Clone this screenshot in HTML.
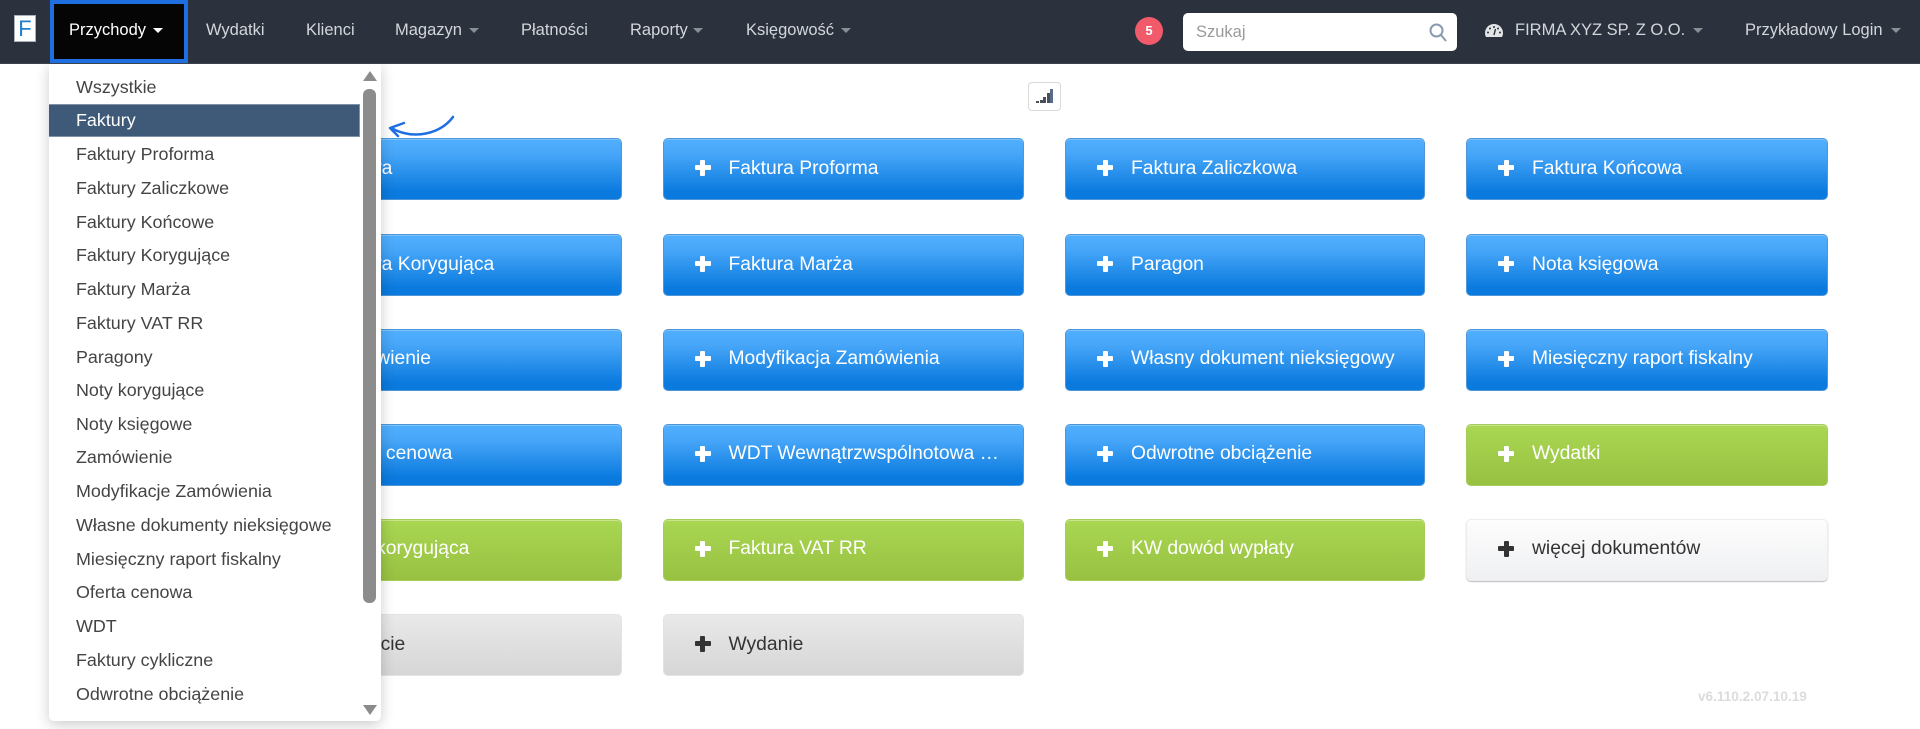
<!DOCTYPE html>
<html lang="pl">
<head>
<meta charset="utf-8">
<title>Przychody</title>
<style>
html,body{margin:0;padding:0;width:1920px;height:729px;overflow:hidden;background:#fff;font-family:"Liberation Sans",sans-serif}
*{box-sizing:border-box}
.nav{position:absolute;z-index:2;left:0;top:0;width:1920px;height:64px;background:#2b323d;border-bottom:1px solid #3d434c}
.n{position:absolute;top:18px;line-height:24px;font-size:16.5px;color:#d3d6da;white-space:nowrap}
.car{position:absolute;top:28px;width:0;height:0;border-left:5.5px solid transparent;border-right:5.5px solid transparent;border-top:5.5px solid #8b9097}
.logo{position:absolute;left:14px;top:15px;width:22px;height:27px;background:#fff;border:1px solid #a9b2bb;color:#1f7fd0;font-size:22px;line-height:25px;text-align:center}
.act{position:absolute;left:50px;top:0;width:138px;height:63px;background:#050505;border:4px solid #1f6fe0}
.badge{position:absolute;left:1135px;top:17px;width:28px;height:28px;border-radius:50%;background:#f05a6a;color:#fff;font-size:13px;font-weight:bold;line-height:27px;text-align:center}
.search{position:absolute;left:1183px;top:13px;width:274px;height:38px;background:#fff;border-radius:5px}
.search span{position:absolute;left:13px;top:7px;font-size:16.5px;line-height:24px;color:#9a9a9a}
.b{position:absolute;width:361px;height:62px;border-radius:5px;font-size:19.3px;line-height:24px;white-space:nowrap}
.b span{position:absolute;left:65px;top:17px}
.d span{top:18px}
.b i{position:absolute;left:31px;top:26px;width:16px;height:5px;background:currentColor;border-radius:1px}
.b i:after{content:"";position:absolute;left:5.5px;top:-5.5px;width:5px;height:16px;background:currentColor;border-radius:1px}
.c3{width:360px}
.c4{width:362px}
.bl{background:linear-gradient(#4fadfd 6%,#47a6f8 25%,#0a7ade 88%);border:1px solid #4e96d8;box-shadow:inset 0 1px 0 #7cc3fd;color:#fff}
.gr{background:linear-gradient(#a9d752,#98c142);border:1px solid #a5cc5c;box-shadow:inset 0 1px 0 #c8e58e;color:#fff}
.wh{background:linear-gradient(#fdfdfd,#eff0f2);border:1px solid #ececec;box-shadow:0 1px 1px #bbb;color:#333}
.sv{background:linear-gradient(#e9e9e9,#d6d6d6);border:1px solid #e3e3e3;color:#333}
.menu{position:absolute;left:49px;top:63px;width:332px;height:658px;background:#fff;border-radius:0 0 5px 5px;box-shadow:0 4px 14px rgba(0,0,0,.2)}
.m{position:absolute;left:27px;font-size:17.9px;line-height:24px;color:#444;white-space:nowrap}
.hl{position:absolute;left:0;top:41px;width:311px;height:33px;background:#3e5a78;border:1px solid #7f92a8;border-left:0}
.thumb{position:absolute;left:314px;top:26px;width:13px;height:514px;background:#8c8c8c;border-radius:6px}
.sig{position:absolute;left:1028px;top:82px;width:33px;height:29px;border:1px solid #d9d9d9;border-radius:4px;background:#fff}
.sig u{position:absolute;bottom:7px;width:3px;background:#4a4f5c}
.ver{position:absolute;left:1698px;top:687px;font-size:13.6px;line-height:20px;color:#dcdcdc;font-weight:bold}
</style>
</head>
<body>
<div class="nav">
<div class="logo">F</div>
<div class="act"></div>
<div class="n" style="left:69px;color:#fff">Przychody</div>
<div class="car" style="left:153px;border-top-color:#fff"></div>
<div class="n" style="left:206px">Wydatki</div>
<div class="n" style="left:306px">Klienci</div>
<div class="n" style="left:395px">Magazyn</div>
<div class="car" style="left:469px"></div>
<div class="n" style="left:521px">Płatności</div>
<div class="n" style="left:630px">Raporty</div>
<div class="car" style="left:693px"></div>
<div class="n" style="left:746px">Księgowość</div>
<div class="car" style="left:841px"></div>
<div class="badge">5</div>
<div class="search"><span>Szukaj</span>
<svg style="position:absolute;left:245px;top:9px" width="20" height="20" viewBox="0 0 20 20" fill="none" stroke="#8a9bb0" stroke-width="2"><circle cx="8.500" cy="8.500" r="6"/><path d="M13 13l5 6"/></svg>
</div>
<svg style="position:absolute;left:1485px;top:24px" width="18" height="13" viewBox="0 0 18 13"><path d="M9 0C4 0 0 4 0 9c0 1.500.4 2.800 1 4h16c.6-1.200 1-2.500 1-4 0-5-4-9-9-9z" fill="#e2e4e6"/><path d="M9 11L10.500 5" stroke="#2b323d" stroke-width="1.400"/><circle cx="3" cy="8.500" r="1" fill="#2b323d"/><circle cx="5" cy="4.500" r="1" fill="#2b323d"/><circle cx="9" cy="3" r="1" fill="#2b323d"/><circle cx="13" cy="4.500" r="1" fill="#2b323d"/><circle cx="15" cy="8.500" r="1" fill="#2b323d"/></svg>
<div class="n" style="left:1515px">FIRMA XYZ SP. Z O.O.</div>
<div class="car" style="left:1693px"></div>
<div class="n" style="left:1745px">Przykładowy Login</div>
<div class="car" style="left:1891px"></div>
</div>

<div class="sig"><u style="left:7px;height:2px"></u><u style="left:10.500px;height:3px"></u><u style="left:14px;height:6px"></u><u style="left:17.500px;height:10px"></u><u style="left:20.500px;height:14px;background:#5a6a8a"></u></div>

<div class="b bl d" style="left:261px;top:138px"><i></i><span>Faktura</span></div>
<div class="b bl d" style="left:662.500px;top:138px"><i></i><span>Faktura Proforma</span></div>
<div class="b bl d c3" style="left:1065px;top:138px"><i></i><span>Faktura Zaliczkowa</span></div>
<div class="b bl d c4" style="left:1466px;top:138px"><i></i><span>Faktura Końcowa</span></div>

<div class="b bl d" style="left:261px;top:234px"><i></i><span>Faktura Korygująca</span></div>
<div class="b bl d" style="left:662.500px;top:234px"><i></i><span>Faktura Marża</span></div>
<div class="b bl d c3" style="left:1065px;top:234px"><i></i><span>Paragon</span></div>
<div class="b bl d c4" style="left:1466px;top:234px"><i></i><span>Nota księgowa</span></div>

<div class="b bl" style="left:261px;top:329px"><i></i><span>Zamówienie</span></div>
<div class="b bl" style="left:662.500px;top:329px"><i></i><span>Modyfikacja Zamówienia</span></div>
<div class="b bl c3" style="left:1065px;top:329px"><i></i><span>Własny dokument nieksięgowy</span></div>
<div class="b bl c4" style="left:1466px;top:329px"><i></i><span>Miesięczny raport fiskalny</span></div>

<div class="b bl" style="left:261px;top:424px"><i></i><span>Oferta cenowa</span></div>
<div class="b bl" style="left:662.500px;top:424px"><i></i><span>WDT Wewnątrzwspólnotowa …</span></div>
<div class="b bl c3" style="left:1065px;top:424px"><i></i><span>Odwrotne obciążenie</span></div>
<div class="b gr c4" style="left:1466px;top:424px"><i></i><span>Wydatki</span></div>

<div class="b gr" style="left:261px;top:519px"><i></i><span>Wyd. korygująca</span></div>
<div class="b gr" style="left:662.500px;top:519px"><i></i><span>Faktura VAT RR</span></div>
<div class="b gr c3" style="left:1065px;top:519px"><i></i><span>KW dowód wypłaty</span></div>
<div class="b wh c4" style="left:1466px;top:519px"><i></i><span>więcej dokumentów</span></div>

<div class="b sv d" style="left:261px;top:614px"><i></i><span>Przyjęcie</span></div>
<div class="b sv d" style="left:662.500px;top:614px"><i></i><span>Wydanie</span></div>

<div class="ver">v6.110.2.07.10.19</div>

<div class="menu">
<div class="hl"></div>
<div class="m" style="top:12px">Wszystkie</div>
<div class="m" style="top:45px;color:#fff">Faktury</div>
<div class="m" style="top:79px">Faktury Proforma</div>
<div class="m" style="top:113px">Faktury Zaliczkowe</div>
<div class="m" style="top:147px">Faktury Końcowe</div>
<div class="m" style="top:180px">Faktury Korygujące</div>
<div class="m" style="top:214px">Faktury Marża</div>
<div class="m" style="top:248px">Faktury VAT RR</div>
<div class="m" style="top:282px">Paragony</div>
<div class="m" style="top:315px">Noty korygujące</div>
<div class="m" style="top:349px">Noty księgowe</div>
<div class="m" style="top:382px">Zamówienie</div>
<div class="m" style="top:416px">Modyfikacje Zamówienia</div>
<div class="m" style="top:450px">Własne dokumenty nieksięgowe</div>
<div class="m" style="top:484px">Miesięczny raport fiskalny</div>
<div class="m" style="top:517px">Oferta cenowa</div>
<div class="m" style="top:551px">WDT</div>
<div class="m" style="top:585px">Faktury cykliczne</div>
<div class="m" style="top:619px">Odwrotne obciążenie</div>
<div class="thumb"></div>
<svg style="position:absolute;left:314px;top:8px" width="14" height="10"><path d="M7 0L14 10H0z" fill="#8c8c8c"/></svg>
<svg style="position:absolute;left:314px;top:642px" width="14" height="10"><path d="M7 10L14 0H0z" fill="#8c8c8c"/></svg>
</div>

<svg style="position:absolute;left:380px;top:105px" width="85" height="40" viewBox="380 105 85 40" fill="none" stroke="#1f6fe0" stroke-width="2.500" stroke-linecap="round" stroke-linejoin="round"><path d="M453 117C441 133 415 141 391 128"/><path d="M404 123L390 128L398 136"/></svg>
</body>
</html>
